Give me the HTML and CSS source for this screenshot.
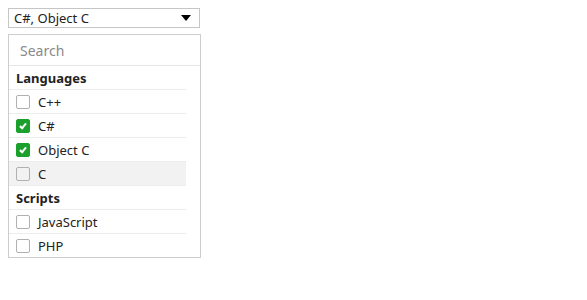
FILE: index.html
```html
<!DOCTYPE html>
<html>
<head>
<meta charset="utf-8" />
<title>Multi select</title>
<link rel="stylesheet" href="styles.css">
</head>
<body>
<div class="select">
	<span class="value">C#, Object C</span>
	<span class="arrow"></span>
</div>
<div class="dropdown">
	<div class="search"><span>Search</span></div>
	<ul class="list">
		<li class="group">Languages</li>
		<li><span class="box"></span>C++</li>
		<li><span class="box on"></span>C#</li>
		<li><span class="box on"></span>Object C</li>
		<li class="hover"><span class="box"></span>C</li>
		<li class="group">Scripts</li>
		<li><span class="box"></span>JavaScript</li>
		<li class="last"><span class="box"></span>PHP</li>
	</ul>
</div>
</body>
</html>
```

FILE: styles.css
```css
body{
	margin:8px;
	font-family:"Segoe UI","Noto Sans",sans-serif;
	font-size:13px;
	color:#222;
}
.select{
	width:177px;
	height:18px;
	border:1px solid #c6c6c6;
	display:flex;
	align-items:center;
	justify-content:space-between;
	padding:0 8px 0 5px;
}
.arrow{
	width:0;
	height:0;
	border-left:5px solid transparent;
	border-right:5px solid transparent;
	border-top:6px solid #000;
}
.dropdown{
	margin-top:6px;
	width:191px;
	border:1px solid #cdcdcd;
}
.search{
	height:30px;
	border-bottom:1px solid #e6e6e6;
	display:flex;
	align-items:center;
	padding-left:11px;
	font-size:14px;
	color:#8a8a8a;
}
.list{
	margin:0;
	padding:0;
	list-style:none;
	width:177px;
}
.list li{
	height:23px;
	border-bottom:1px solid #ececec;
	display:flex;
	align-items:center;
	padding-left:7px;
}
.list li.last{border-bottom:none}
.list li.group{font-weight:bold}
.list li.hover{background:#f2f2f2}
.box{
	width:12px;
	height:12px;
	border:1px solid #b0b0b0;
	border-radius:2px;
	margin-right:8px;
	position:relative;
	flex:none;
}
.box.on{
	background:#1ba12b;
	border-color:#1ba12b;
}
.box.on:after{
	content:"";
	position:absolute;
	left:4px;
	top:2px;
	width:2px;
	height:5px;
	border-right:2px solid #fff;
	border-bottom:2px solid #fff;
	transform:rotate(40deg);
}
```
